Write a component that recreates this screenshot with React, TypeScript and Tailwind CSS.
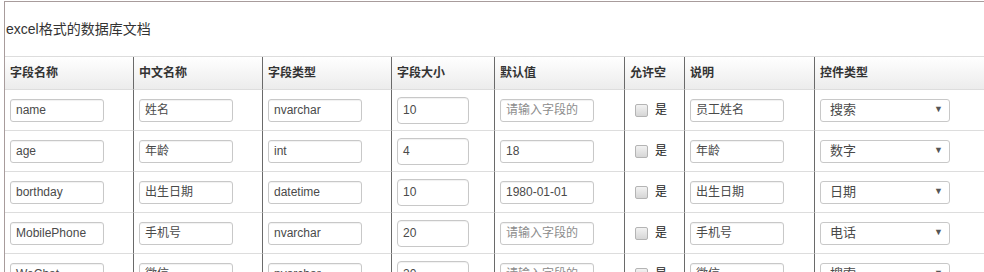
import React from "react";

type Row = {
    field: string;
    cn: string;
    type: string;
    size: string;
    def: string;
    desc: string;
    ctrl: string;
};

const rows: Row[] = [
    { field: "name", cn: "姓名", type: "nvarchar", size: "10", def: "", desc: "员工姓名", ctrl: "搜索" },
    { field: "age", cn: "年龄", type: "int", size: "4", def: "18", desc: "年龄", ctrl: "数字" },
    { field: "borthday", cn: "出生日期", type: "datetime", size: "10", def: "1980-01-01", desc: "出生日期", ctrl: "日期" },
    { field: "MobilePhone", cn: "手机号", type: "nvarchar", size: "20", def: "", desc: "手机号", ctrl: "电话" },
    { field: "WeChat", cn: "微信", type: "nvarchar", size: "20", def: "", desc: "微信", ctrl: "搜索" },
];

const headers = ["字段名称", "中文名称", "字段类型", "字段大小", "默认值", "允许空", "说明", "控件类型"];

const gridCols = "grid grid-cols-[129px_129px_129px_103px_130px_60px_130px_1fr]";

// plain text box, like the old bootstrap-ish inputs
function TextBox({ value, placeholder, wide }: { value: string; placeholder?: string; wide?: boolean }) {
    const empty = value === "";
    return (
        <div
            className={
                wide
                    ? "w-[72px] h-[27px] border border-[#c8c8c8] rounded-[4px] pl-[5px] flex items-center text-[12px] text-[#4a4a4a] shadow-[inset_0_1px_1px_rgba(0,0,0,0.06)]"
                    : "w-[94px] h-[23px] border border-[#c8c8c8] rounded-[3px] pl-[5px] flex items-center text-[12px] shadow-[inset_0_1px_1px_rgba(0,0,0,0.06)] whitespace-nowrap overflow-hidden " +
                      (empty ? "text-[#8c8c8c]" : "text-[#4a4a4a]")
            }
        >
            {empty ? placeholder : value}
        </div>
    );
}

export default function App() {
    return (
        <div
            className="w-[984px] h-[272px] overflow-hidden bg-white pt-px"
            style={{ fontFamily: '"Liberation Sans", "Noto Sans CJK SC", sans-serif' }}
        >
            <div className="ml-[4px] border-l border-t border-[#a89c9c]">
                {/* Title */}
                <div className="h-[54px] flex items-center pl-px text-[14px] text-[#333]">
                    excel格式的数据库文档
                </div>

                {/* Header */}
                <div className={gridCols + " border-t border-[#dddddd]"}>
                    {headers.map((h, i) => (
                        <div
                            key={h}
                            className={
                                "h-[33px] flex items-center pl-[5px] text-[12px] font-bold text-[#333] border-b border-b-[#dddddd] bg-gradient-to-b from-white to-[#ececec] " +
                                (i < headers.length - 1 ? "border-r border-r-[#6a6a6a]" : "")
                            }
                        >
                            {h}
                        </div>
                    ))}
                </div>

                {/* Rows */}
                {rows.map((r) => (
                    <div key={r.field} className={gridCols}>
                        <div className="h-[41px] flex items-center pl-[5px] border-b border-b-[#dddddd] border-r border-r-[#6a6a6a]">
                            <TextBox value={r.field} />
                        </div>
                        <div className="h-[41px] flex items-center pl-[5px] border-b border-b-[#dddddd] border-r border-r-[#6a6a6a]">
                            <TextBox value={r.cn} />
                        </div>
                        <div className="h-[41px] flex items-center pl-[5px] border-b border-b-[#dddddd] border-r border-r-[#6a6a6a]">
                            <TextBox value={r.type} />
                        </div>
                        <div className="h-[41px] flex items-center pl-[5px] border-b border-b-[#dddddd] border-r border-r-[#6a6a6a]">
                            <TextBox value={r.size} wide />
                        </div>
                        <div className="h-[41px] flex items-center pl-[5px] border-b border-b-[#dddddd] border-r border-r-[#6a6a6a]">
                            <TextBox value={r.def} placeholder="请输入字段的" />
                        </div>
                        <div className="h-[41px] flex items-center pl-[10px] gap-[7px] border-b border-b-[#dddddd] border-r border-r-[#6a6a6a]">
                            <div className="w-[13px] h-[13px] rounded-[2px] border border-[#b4b4b4] bg-gradient-to-b from-[#f2f2f2] to-[#d6d6d6]"></div>
                            <span className="text-[12px] text-[#222]">是</span>
                        </div>
                        <div className="h-[41px] flex items-center pl-[5px] border-b border-b-[#dddddd] border-r border-r-[#6a6a6a]">
                            <TextBox value={r.desc} />
                        </div>
                        <div className="h-[41px] flex items-center pl-[5px] border-b border-b-[#dddddd]">
                            <div className="w-[130px] h-[23px] border border-[#c8c8c8] rounded-[3px] pl-[9px] pr-[6px] flex items-center justify-between text-[13px] text-[#4a4a4a]">
                                <span>{r.ctrl}</span>
                                <span className="text-[9px] text-[#555]">▼</span>
                            </div>
                        </div>
                    </div>
                ))}
            </div>
        </div>
    );
}
